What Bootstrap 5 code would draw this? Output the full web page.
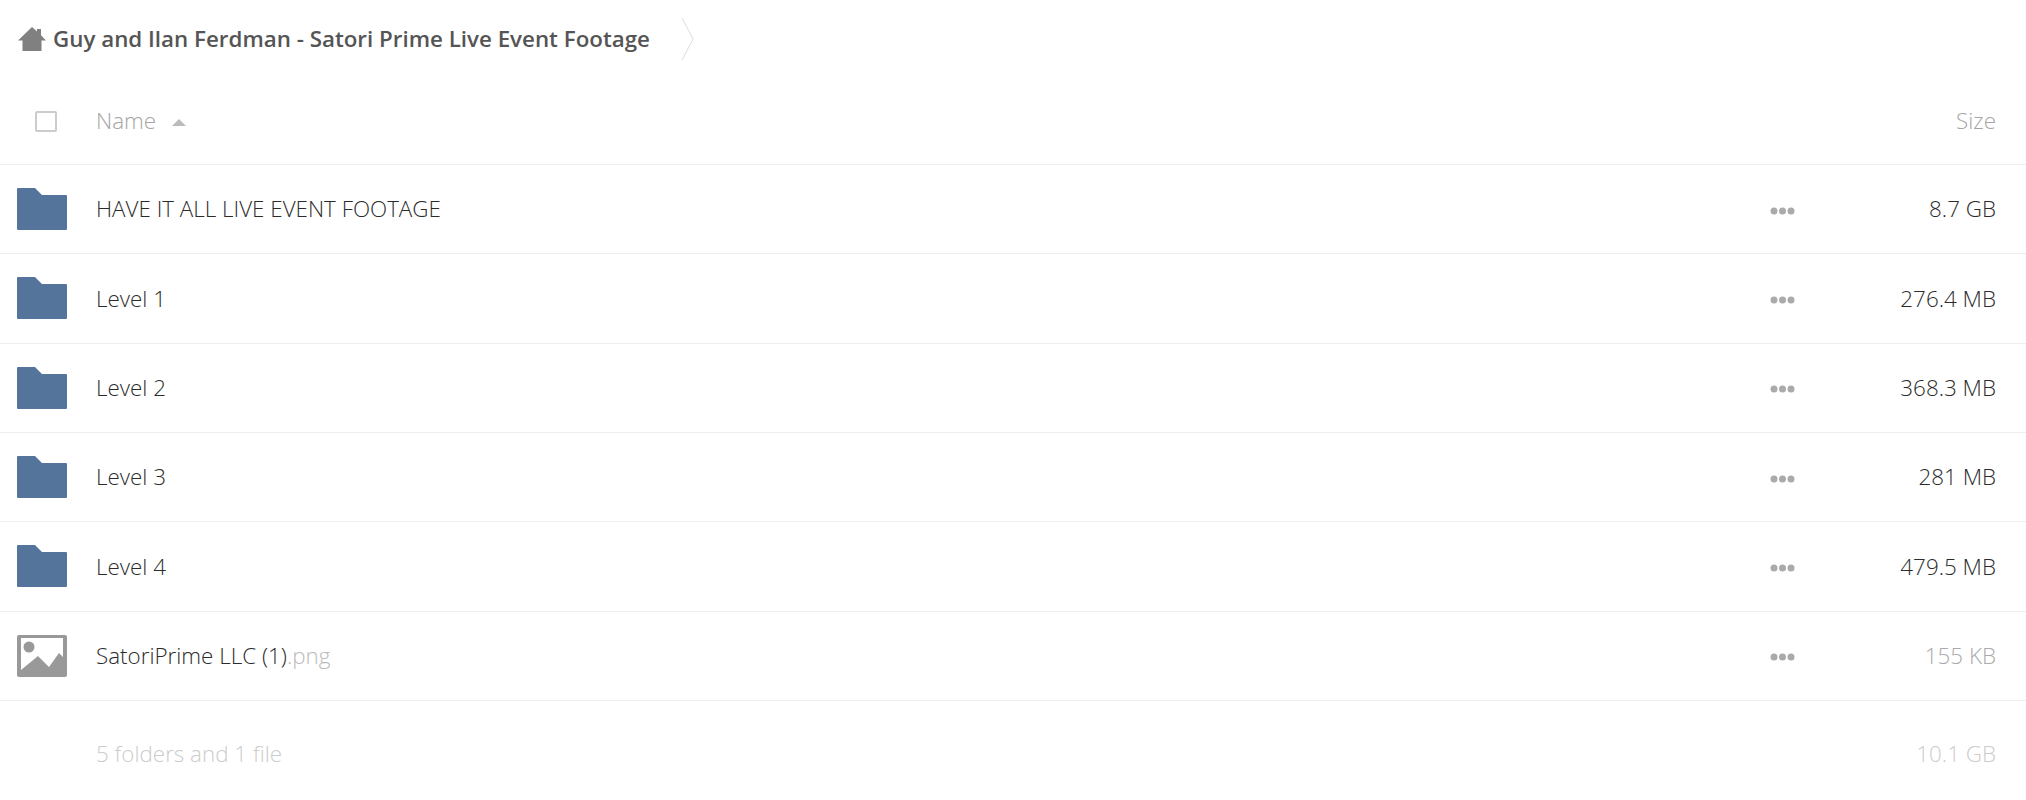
<!DOCTYPE html>
<html lang="en">
<head>
    <meta charset="UTF-8">
    <meta name="viewport" content="width=device-width, initial-scale=1.0">
    <title>Guy and Ilan Ferdman - Satori Prime Live Event Footage</title>
    <link href="https://cdn.jsdelivr.net/npm/bootstrap@5.3.1/dist/css/bootstrap.min.css" rel="stylesheet">
    <style>
        body {
            font-family: "Open Sans", sans-serif;
            font-weight: 300;
            font-size: 22.4px;
            color: #2b2b2b;
            background: #fff;
        }
        .crumb-bar {
            height: 78px;
            padding-left: 18px;
        }
        .crumb-title {
            font-size: 22.35px;
            font-weight: 600;
            color: #555;
            margin-left: 7px;
        }
        .crumb-arrow {
            margin-left: 31px;
        }
        .list-head {
            height: 87px;
            border-bottom: 1px solid #eee;
            color: #a5a5a5;
        }
        .file-row {
            height: 89.33px;
            border-bottom: 1px solid #eee;
        }
        .col-icon {
            width: 96px;
            padding-left: 17px;
            flex-shrink: 0;
        }
        .col-size {
            width: 231px;
            padding-right: 30px;
            text-align: right;
            flex-shrink: 0;
        }
        .check-box {
            display: block;
            width: 22px;
            height: 21px;
            margin-left: 35px;
            border: 2px solid #ccc;
            border-radius: 2px;
        }
        .sort-up {
            display: inline-block;
            margin-left: 10px;
            border-left: 7px solid transparent;
            border-right: 7px solid transparent;
            border-bottom: 7px solid #bbb;
            vertical-align: 3px;
        }
        .row-dots {
            width: 25px;
            margin-top: 3px;
        }
        .ext {
            color: #bbb;
        }
        .summary {
            height: 106px;
            color: #ccc;
        }
    </style>
</head>
<body>
    <!-- breadcrumb -->
    <div class="crumb-bar d-flex align-items-center">
        <svg width="28" height="24" viewBox="0 0 28 24"><path fill="#808080" d="M14 0l5 4.500V2h4v6.300L28 13.500h-4.500V24h-19V13.500H0z"/></svg>
        <span class="crumb-title">Guy and Ilan Ferdman - Satori Prime Live Event Footage</span>
        <svg class="crumb-arrow" width="14" height="44" viewBox="0 0 14 44"><path fill="none" stroke="#ddd" d="M1 1l11 21L1 43"/></svg>
    </div>

    <!-- header -->
    <div class="list-head d-flex align-items-center">
        <div class="col-icon p-0"><span class="check-box"></span></div>
        <div class="flex-grow-1">Name <span class="sort-up"></span></div>
        <div class="col-size">Size</div>
    </div>

    <div id="file-list"></div>

    <div class="summary d-flex align-items-center">
        <div class="col-icon"></div>
        <div class="flex-grow-1">5 folders and 1 file</div>
        <div class="col-size">10.1 GB</div>
    </div>

    <script>
        const files = [
            { name: "HAVE IT ALL LIVE EVENT FOOTAGE", size: "8.7 GB" },
            { name: "Level 1", size: "276.4 MB" },
            { name: "Level 2", size: "368.3 MB" },
            { name: "Level 3", size: "281 MB" },
            { name: "Level 4", size: "479.5 MB" },
            { name: "SatoriPrime LLC (1)", ext: ".png", size: "155 KB", image: true }
        ];

        const folderIcon = '<svg class="d-block" width="50" height="42" viewBox="0 0 50 42"><path fill="#55749b" d="M1 0h17l7 7h24a1 1 0 0 1 1 1v33a1 1 0 0 1-1 1H1a1 1 0 0 1-1-1V1a1 1 0 0 1 1-1z"/></svg>';
        const imageIcon = '<svg class="d-block" width="50" height="42" viewBox="0 0 50 42"><path fill="#999" fill-rule="evenodd" d="M2 0h46a2 2 0 0 1 2 2v38a2 2 0 0 1-2 2H2a2 2 0 0 1-2-2V2a2 2 0 0 1 2-2zm2 3v32l17-14 11 11 10-14 4 4V3z"/><circle fill="#999" cx="12" cy="12" r="5.500"/></svg>';

        document.getElementById("file-list").innerHTML = files.map((file) => `
            <div class="file-row d-flex align-items-center">
                <div class="col-icon">${file.image ? imageIcon : folderIcon}</div>
                <div class="flex-grow-1">${file.name}${file.ext ? `<span class="ext">${file.ext}</span>` : ''}</div>
                <svg class="row-dots" height="8" viewBox="0 0 25 8"><g fill="#aaa"><circle cx="4" cy="4" r="3.500"/><circle cx="12.500" cy="4" r="3.500"/><circle cx="21" cy="4" r="3.500"/></g></svg>
                <div class="col-size" ${file.image ? 'style="color:#aaa"' : ''}>${file.size}</div>
            </div>`).join('');
    </script>

    <script src="https://cdn.jsdelivr.net/npm/bootstrap@5.3.1/dist/js/bootstrap.bundle.min.js"></script>
</body>
</html>
